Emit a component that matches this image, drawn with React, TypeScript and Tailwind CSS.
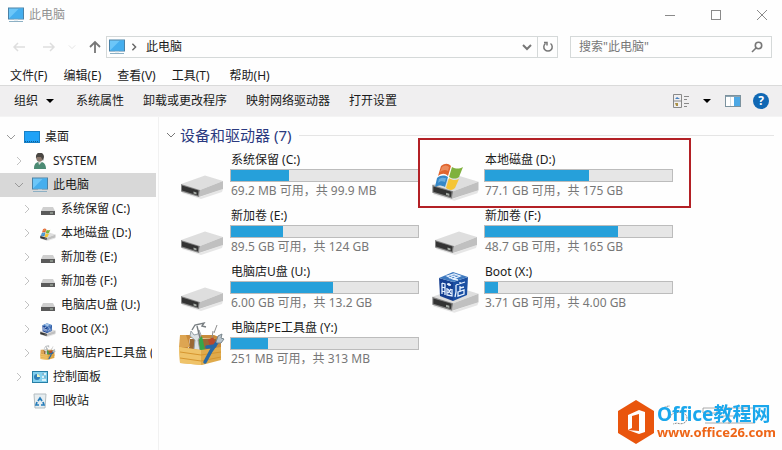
import React from "react";

type IconProps = { className?: string };

const BODY = 'font-["Noto_Sans","Noto_Sans_CJK_SC",sans-serif]';

function Monitor({ className }: IconProps) {
  return (
    <svg viewBox="0 0 18 16" className={className} aria-hidden="true">
      <rect x="1.5" y="1" width="15" height="11" fill="#6cc6f8" stroke="#4a81a6" />
      <path d="M2 11.5 L12 1.5 H16 V11.5Z" fill="#45aeee" />
      <path d="M2 14.5h14" stroke="#8db0c4" />
      <path d="M7 13h4" stroke="#cfdde5" />
    </svg>
  );
}

function Desktop({ className }: IconProps) {
  return (
    <svg viewBox="0 0 18 16" className={className} aria-hidden="true">
      <rect x="1.5" y="2.5" width="15" height="11" fill="#1fa2f7" stroke="#1880c6" />
      <path d="M2 12.5h14" stroke="#0c5c93" strokeDasharray="1 1" />
    </svg>
  );
}

function Person({ className }: IconProps) {
  return (
    <svg viewBox="0 0 18 16" className={className} aria-hidden="true">
      <path d="M3 16c0-4 1-6 4-7h4c3 1 4 4 4 7z" fill="#4c8b74" />
      <path d="M7 8l1 4 3-3z" fill="#d8ddd8" />
      <ellipse cx="8.5" cy="4.5" rx="3.2" ry="4.3" fill="#8b786c" />
      <path d="M5 5c-1-7 8-7 8-1l-1 4-2-4-4 0-1 2z" fill="#4a4743" />
    </svg>
  );
}

function SmallDrive({ className }: IconProps) {
  return (
    <svg viewBox="0 0 18 16" className={className} aria-hidden="true">
      <path d="M4 6h10l2 4H2z" fill="#cfcfcf" />
      <rect x="2" y="10" width="14" height="4" fill="#5a5a5a" />
      <path d="M11 12h3" stroke="#b8c8b8" />
    </svg>
  );
}

function DriveBody() {
  return (
    <>
      <path d="M4 37L22 44L45 36L44 39L23 46L4 40Z" fill="#888" opacity=".2" />
      <path d="M3 31L27 22.5L45 28L22 37Z" fill="#dedede" />
      <path d="M22 37L45 28V36L21 44Z" fill="#c0c0c0" />
      <path d="M3 31L22 37L21 44L3 38.5Z" fill="#858585" />
      <path d="M4 32.5L20.5 37.5L20 42.5L4 37.5Z" fill="#333" />
      <path d="M15.5 38.5l3 1v2l-3-1z" fill="#a5aaa5" />
    </>
  );
}

function Drive({ className }: IconProps) {
  return (
    <svg viewBox="0 0 48 48" className={className} aria-hidden="true">
      <DriveBody />
    </svg>
  );
}

function LargeDriveBody() {
  return (
    <g transform="translate(-3 -1) scale(1.1 1.06)">
      <DriveBody />
    </g>
  );
}

function WindowsDrive({ className }: IconProps) {
  return (
    <svg viewBox="0 0 48 48" className={className} aria-hidden="true">
      <LargeDriveBody />
      <path d="M9 13c4-3 7-3 10 0l-3 10c-3-3-6-3-10 0z" fill="#e0652f" />
      <path d="M20 14c4 2 7 2 11 0l-4 10c-3 2-6 2-10 0z" fill="#7fb13e" />
      <path d="M5 25c4-3 7-3 11-1l-3 10c-4-2-7-2-10 0z" fill="#3588c8" />
      <path d="M17 25c3 2 6 3 10 1l-4 9c-3 3-6 2-9 0z" fill="#f5c536" />
      <path d="M10 14c3-2 5-2 7 0l-1 4c-3-2-5-1-8 1z" fill="#f4a67c" opacity=".6" />
      <path d="M7 26c3-2 5-1 7-1l-1 4c-3-1-5-1-7 1z" fill="#8bc4ee" opacity=".6" />
    </svg>
  );
}

function BootDrive({ className }: IconProps) {
  return (
    <svg viewBox="0 0 48 48" className={className} aria-hidden="true">
      <LargeDriveBody />
      <path d="M7 13L21 17V36L8 31Z" fill="#163f91" />
      <path d="M21 17L36 12L35 30L21 36Z" fill="#1b4fa2" />
      <path d="M7 13L21 7L36 12L21 17Z" fill="#3e79bf" />
      <g fill="none" stroke="#e6f1ff" strokeWidth="1.3">
        <path d="M10 18v11M10 18l3 1v11M10 22l3 1M10 26l3 1M15 19l4 1M17 18v3M15 23v7l5 1v-7M16 24l3 5M19 24l-3 4" />
        <path d="M24 20l9-3M28 17v2M24 20v7l-1 5M28 21v6M28 23l4-1M26 27l6-2v4l-6 2z" />
        <path d="M15 11l7-2 6 2-7 3zM18 10l7 3M17 13l8-3M21 14l5 1" />
      </g>
    </svg>
  );
}

function Toolbox({ className }: IconProps) {
  return (
    <svg viewBox="0 0 48 48" className={className} aria-hidden="true">
      <path d="M7 14L36 14L43 17V33L38 31V18L12 17L9 31L2 31Z" fill="#c98a3b" />
      <path d="M12 18h26v13H10z" fill="#9a6834" />
      <path d="M16 28L17 19L12 15L13 10L16 14L20 13L21 9L23 14L20 19L22 30" fill="#dce1e4" stroke="#98a2a8" />
      <path d="M14 9l3-5 9-2-2 3 4 1M19 5l3 12" fill="none" stroke="#777d80" strokeWidth="1.4" />
      <path d="M21 18l3-3 3 14h-5z" fill="#35a64a" />
      <path d="M30 19l5-3 4 8-6 5z" fill="#b84a2d" />
      <path d="M34 17l1-7M36 12l3-8" stroke="#8f8f8f" strokeWidth="1" />
      <path d="M2 14h6l4 12H1z" fill="#dda552" />
      <path d="M1 26L23 29L43 26V39L24 44L2 42Z" fill="#dfaa4b" />
      <path d="M1 26L23 29V44L2 42Z" fill="#efc369" />
      <path d="M2 31l21 3 20-3M2 37l21 3 20-4" fill="none" stroke="#d6962f" />
      <path d="M27 41l6-11 7-10M29 26l8-1" fill="none" stroke="#2869a5" strokeWidth="3.5" strokeLinecap="round" />
      <path d="M38 21l2-6 4-2-1 4 3 1-3 4-4 0" fill="#b9c5cd" stroke="#78858c" />
    </svg>
  );
}

function ControlPanel({ className }: IconProps) {
  return (
    <svg viewBox="0 0 18 16" className={className} aria-hidden="true">
      <rect x="1.5" y="2.5" width="15" height="11" fill="#83d0ee" stroke="#277fa6" />
      <circle cx="6" cy="8" r="3" fill="#2f7fb9" />
      <path d="M6 8V5a3 3 0 0 1 3 3z" fill="#edf6c5" />
      <path d="M11 5h4M11 8h4M11 11h4" stroke="#f4fbfd" strokeWidth="1.5" />
      <path d="M12 4v2M14 7v2" stroke="#347fa5" />
    </svg>
  );
}

function Bin({ className }: IconProps) {
  return (
    <svg viewBox="0 0 18 16" className={className} aria-hidden="true">
      <path d="M3 1h12l-1 14H4z" fill="#e6edf0" stroke="#b4bdc1" />
      <path d="M7 8l2-3 2 3M12 9l1 3h-3M8 12H5l1-3" fill="none" stroke="#277dba" strokeWidth="1.7" />
    </svg>
  );
}

function Chevron({ open, className }: { open?: boolean; className?: string }) {
  return (
    <svg viewBox="0 0 10 10" className={className} fill="none" stroke="currentColor" aria-hidden="true">
      <path d={open ? "M1 3l4 4 4-4" : "M3 1l4 4-4 4"} />
    </svg>
  );
}

type Node = { label: string; icon: React.FC<IconProps>; level: 0 | 1 | 2; state?: "open" | "closed"; active?: boolean };

const tree: Node[] = [
  { label: "桌面", icon: Desktop, level: 0, state: "open" },
  { label: "SYSTEM", icon: Person, level: 1, state: "closed" },
  { label: "此电脑", icon: Monitor, level: 1, state: "open", active: true },
  { label: "系统保留 (C:)", icon: SmallDrive, level: 2, state: "closed" },
  { label: "本地磁盘 (D:)", icon: WindowsDrive, level: 2, state: "closed" },
  { label: "新加卷 (E:)", icon: SmallDrive, level: 2, state: "closed" },
  { label: "新加卷 (F:)", icon: SmallDrive, level: 2, state: "closed" },
  { label: "电脑店U盘 (U:)", icon: SmallDrive, level: 2, state: "closed" },
  { label: "Boot (X:)", icon: BootDrive, level: 2, state: "closed" },
  { label: "电脑店PE工具盘 (Y:)", icon: Toolbox, level: 2, state: "closed" },
  { label: "控制面板", icon: ControlPanel, level: 1, state: "closed" },
  { label: "回收站", icon: Bin, level: 1 },
];

const indent = { 0: "pl-1.5", 1: "pl-3.5", 2: "pl-5.5" };

const drives = [
  { name: "系统保留 (C:)", info: "69.2 MB 可用，共 99.9 MB", used: 31, icon: Drive },
  { name: "本地磁盘 (D:)", info: "77.1 GB 可用，共 175 GB", used: 55.5, icon: WindowsDrive, marked: true },
  { name: "新加卷 (E:)", info: "89.5 GB 可用，共 124 GB", used: 28, icon: Drive },
  { name: "新加卷 (F:)", info: "48.7 GB 可用，共 165 GB", used: 71, icon: Drive },
  { name: "电脑店U盘 (U:)", info: "6.00 GB 可用，共 13.2 GB", used: 54.5, icon: Drive },
  { name: "Boot (X:)", info: "3.71 GB 可用，共 4.00 GB", used: 7, icon: BootDrive },
  { name: "电脑店PE工具盘 (Y:)", info: "251 MB 可用，共 313 MB", used: 20, icon: Toolbox },
];

function TitleBar() {
  return (
    <header className="flex h-[30px] items-center pr-3.5 pl-[7px]">
      <Monitor className="h-4 w-4.5" />
      <h1 className="ml-1 flex-1 text-[#929292]">此电脑</h1>
      <div className="flex gap-[34px] text-[#8a8a8a]">
        <button aria-label="最小化" className="size-3">
          <svg viewBox="0 0 12 12" stroke="currentColor"><path d="M1 6.5h10" /></svg>
        </button>
        <button aria-label="最大化" className="size-3">
          <svg viewBox="0 0 12 12" fill="none" stroke="currentColor"><rect x="1.5" y="1.5" width="9" height="9" /></svg>
        </button>
        <button aria-label="关闭" className="size-3">
          <svg viewBox="0 0 12 12" stroke="currentColor"><path d="M1 1l10 10M11 1L1 11" /></svg>
        </button>
      </div>
    </header>
  );
}

function AddressRow() {
  return (
    <div className="flex items-center pt-1.5 pr-2.5 pl-3">
      <nav className="flex w-[94px] items-center gap-4 text-[#dedede]" aria-label="导航">
        <button aria-label="后退" className="h-3.5 w-3.5">
          <svg viewBox="0 0 14 14" fill="none" stroke="currentColor" strokeWidth="1.5"><path d="M13 7H2M6 3L2 7l4 4" /></svg>
        </button>
        <button aria-label="前进" className="h-3.5 w-3.5">
          <svg viewBox="0 0 14 14" fill="none" stroke="currentColor" strokeWidth="1.5"><path d="M1 7h11M8 3l4 4-4 4" /></svg>
        </button>
        <button aria-label="最近" className="-mx-1 size-2"><Chevron open /></button>
        <button aria-label="上移" className="h-3.5 w-3.5 text-[#777]">
          <svg viewBox="0 0 14 14" fill="none" stroke="currentColor" strokeWidth="1.8"><path d="M7 13V2M2 7l5-5 5 5" /></svg>
        </button>
      </nav>
      <div className="flex h-[22px] flex-1 items-center border border-[#d5d9d9] pl-px">
        <Monitor className="h-4 w-4.5" />
        <Chevron className="ml-1 size-2 stroke-[1.8] text-[#666]" />
        <span className="ml-2 flex-1">此电脑</span>
        <button aria-label="历史记录" className="flex h-full w-5 items-center justify-center text-[#777]">
          <Chevron open className="size-2.5 stroke-2" />
        </button>
        <button aria-label="刷新" className="flex h-full w-5 items-center justify-center border-l border-[#d5d9d9] text-[#777]">
          <svg viewBox="0 0 12 12" className="size-3" fill="none" stroke="currentColor" strokeWidth="1.5">
            <path d="M8.5 2.5a4.2 4.2 0 1 1-5 0M2 1.5h3v3" />
          </svg>
        </button>
      </div>
      <label className="ml-3 flex h-[22px] w-[202px] items-center border border-[#d5d9d9] px-2">
        <input aria-label="搜索" placeholder={'搜索"此电脑"'} className="min-w-0 flex-1 outline-none placeholder:text-[#777]" />
        <svg viewBox="0 0 12 12" className="size-3" fill="none" stroke="#777" strokeWidth="1.6" aria-hidden="true">
          <circle cx="7.5" cy="4.5" r="3.2" /><path d="M5 7l-4 4" />
        </svg>
      </label>
    </div>
  );
}

function CommandBar() {
  return (
    <div className="flex h-8 items-center gap-[19px] border-y border-t-[#dadada] border-b-[#f4f4f4] bg-[#f0eff0] pr-[13px] pl-3.5">
      <button className="flex items-center gap-2">
        组织
        <svg viewBox="0 0 8 4" className="h-1 w-2" aria-hidden="true"><path d="M0 0h8L4 4z" /></svg>
      </button>
      <button className="ml-[3px]">系统属性</button>
      <button>卸载或更改程序</button>
      <button>映射网络驱动器</button>
      <button>打开设置</button>
      <div className="ml-auto flex items-center">
        <button aria-label="更改视图" className="h-4 w-4">
          <svg viewBox="0 0 16 16" fill="none" stroke="#898989">
            <path d="M.5 1.5h8v13h-8zM.5 8h8M11 3.5h5M11 6.5h3M11 10.5h5M11 13.5h3" />
            <path d="M2 6l2-2 3 2z" fill="#477fbd" stroke="none" /><path d="M2 10h3v3H3z" fill="#ab9147" stroke="none" />
          </svg>
        </button>
        <button aria-label="视图选项" className="ml-3 flex h-4 w-3 items-center justify-center">
          <svg viewBox="0 0 8 4" className="h-1 w-2"><path d="M0 0h8L4 4z" /></svg>
        </button>
        <button aria-label="预览窗格" className="ml-3 h-4 w-4">
          <svg viewBox="0 0 16 16"><rect x=".5" y="2.5" width="15" height="11" fill="#fff" stroke="#7c929e" /><path d="M9 3h6v10H9z" fill="#4da8e5" /><path d="M1 3.5h14" stroke="#8ca3b1" /><path d="M5.5 4v9" stroke="#d4dfe5" /></svg>
        </button>
        <button aria-label="帮助" className="ml-3 flex size-4 items-center justify-center rounded-full bg-[#1168b4] font-bold text-white">?</button>
      </div>
    </div>
  );
}

function Sidebar() {
  return (
    <aside className="w-[159px] shrink-0 overflow-hidden border-r border-[#f1f1f1] pt-2">
      <ul>
        {tree.map(({ label, icon: Icon, level, state, active }) => (
          <li key={label} className="mr-0.5">
            <button className={`flex h-6 w-full items-center pr-1 text-left whitespace-nowrap ${indent[level]} ${active ? "bg-[#d8d8d8]" : ""}`}>
              <span className="w-2.5 shrink-0">
                {state && <Chevron open={state === "open"} className={state === "open" ? "size-2.5 text-[#999]" : "size-2.5 text-[#c2c2c2]"} />}
              </span>
              <Icon className="ml-[7px] h-4 w-4.5 shrink-0" />
              <span className="ml-1 min-w-0 overflow-hidden">{label}</span>
            </button>
          </li>
        ))}
      </ul>
    </aside>
  );
}

function Tile({ drive }: { drive: (typeof drives)[number] }) {
  const Icon = drive.icon;
  return (
    <li className="relative flex h-14">
      <Icon className="mt-0.5 size-12 shrink-0" />
      <div className="ml-1 flex-1 pr-[13px]">
        <p className="pl-px">{drive.name}</p>
        <div className="h-[13px] border border-[#bcbcbc] bg-[#e6e6e6]">
          <div className="h-full bg-[#26a0da]" style={{ width: `${drive.used}%` }} />
        </div>
        <p className="pl-px text-[#777]">{drive.info}</p>
      </div>
      {drive.marked && <div className="pointer-events-none absolute -top-[13px] -right-[5px] -bottom-px -left-3.5 border-2 border-[#b32025]" />}
    </li>
  );
}

function Watermark() {
  return (
    <div className="fixed right-1.5 bottom-1.5 flex items-center">
      <svg viewBox="0 0 38 44" className="mr-0.5 h-11 w-[38px]" aria-hidden="true">
        <path d="M19 0L37 11V33L19 44L1 33V11Z" fill="#e9550d" />
        <path d="M11 15L22 10L28 12V32L22 34L11 30L22 31V14L15 16V28L11 30Z" fill="#fff" />
      </svg>
      <div className="relative font-bold">
        <svg viewBox="0 0 100 24" className="absolute top-0 left-1 h-6 w-[100px]" fill="none" stroke="#8a8a8a" aria-hidden="true">
          <path d="M1 6c1-3 5-4 8-4M9 14c0-7 17-8 17 0 0 5-5 7-10 5l-4 1" strokeDasharray="2 1" />
          <path d="M42 4h50M42 9h14M60 12h18M44 19h50M42 4v5M56 4v5M68 3v17M82 4v8" opacity=".7" />
        </svg>
        <p className="relative text-[19px] leading-5 text-[#1aa7ec]">Office教程网</p>
        <p className="text-[13px] leading-4 text-[#ee6517]">www.office26.com</p>
      </div>
    </div>
  );
}

export default function App() {
  return (
    <div className={`flex min-h-screen flex-col bg-[#fefefe] text-[12px] leading-[18px] text-[#1b1b1b] ${BODY}`}>
      <TitleBar />
      <AddressRow />
      <div className="flex h-[27px] items-end gap-4 pl-2.5">
        <button>文件(F)</button>
        <button>编辑(E)</button>
        <button>查看(V)</button>
        <button>工具(T)</button>
        <button className="ml-1">帮助(H)</button>
      </div>
      <CommandBar />
      <div className="flex flex-1">
        <Sidebar />
        <main className="min-w-0 flex-1 pt-2 pr-2 pl-[7px]">
          <h2 className="flex h-5 items-center text-[15px] text-[#2b3a80]">
            <Chevron open className="mr-1 size-2.5 text-[#777]" />
            设备和驱动器 (7)
            <span className="ml-2 h-px flex-1 bg-[#e5e5e5]" />
          </h2>
          <ul className="mt-1.5 grid grid-cols-[repeat(auto-fill,254px)] pl-3">
            {drives.map((drive) => <Tile key={drive.name} drive={drive} />)}
          </ul>
        </main>
      </div>
      <Watermark />
    </div>
  );
}
